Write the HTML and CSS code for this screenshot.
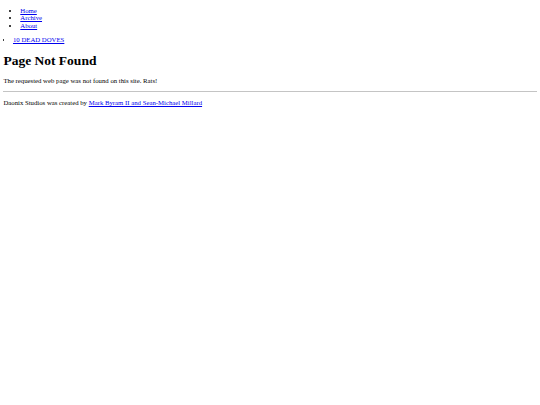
FILE: index.html
```html
<!DOCTYPE html>
<html>
<head>
<meta charset="utf-8">
<title>Page Not Found</title>
<link rel="stylesheet" href="styles.css">
</head>
<body>
<ul class="nav">
  <li><a href="#">Home</a></li>
  <li><a href="#">Archive</a></li>
  <li><a href="#">About</a></li>
</ul>
<ul class="sites">
  <li><a href="#">10 DEAD DOVES</a></li>
</ul>
<h1 class="title">Page Not Found</h1>
<p class="msg">The requested web page was not found on this site. Rats!</p>
<hr class="rule">
<p class="footer">Daonix Studios was created by <a href="#">Mark Byram II and Sean-Michael Millard</a></p>
</body>
</html>
```
FILE: styles.css
```css
html {
  background: #fff;
}
body {
  margin: 3.4px;
  font-family: "Liberation Serif", "Times New Roman", serif;
  font-size: 6.75px;
  line-height: 7.5px;
  color: #000;
}
a {
  color: #0000ee;
}
.nav {
  margin: 3.4px 0 6.75px;
  padding-left: 16.9px;
}
.sites {
  margin: 6.75px 0;
  padding-left: 9.6px;
}
.title {
  font-size: 13.5px;
  line-height: 15.5px;
  margin: 9px 0;
}
.msg,
.footer {
  margin: 6.75px 0;
}
.rule {
  margin: 3.4px 0;
  border: 0;
  border-top: 1px solid #c4c4c4;
  height: 0;
}
```
